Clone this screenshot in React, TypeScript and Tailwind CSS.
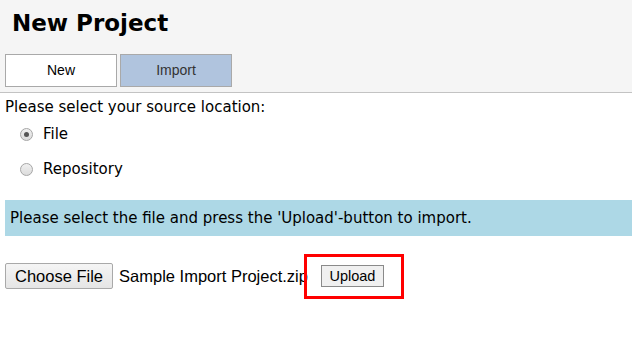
import React, { useState } from 'react';

const Radio = ({ checked, label, onClick }: { checked: boolean; label: string; onClick: () => void }) => (
  <label className="flex items-center h-[35px] pl-[15px] cursor-pointer" onClick={onClick}>
    <span className="w-[13px] h-[13px] rounded-full border border-[#a6a6a6] bg-gradient-to-b from-[#f0f0f0] to-[#dcdcdc] flex items-center justify-center">
      {checked && <span className="w-[5px] h-[5px] rounded-full bg-[#555]" />}
    </span>
    <span className="ml-[10px] text-[15px] text-black">{label}</span>
  </label>
);

const App = () => {
  const [tab, setTab] = useState<'new' | 'import'>('import');
  const [source, setSource] = useState<'file' | 'repo'>('file');

  return (
    <div className="w-[632px] h-[349px] bg-white font-['DejaVu_Sans',Verdana,sans-serif] overflow-hidden">
      <div className="bg-[#f5f5f5] border-b border-[#c3c3c3] h-[93px] px-[5px]">
        <h1 className="text-[23px] font-bold text-black pt-[8px] pl-[7px] leading-[30px] h-[54px]">New Project</h1>
        <div className="flex gap-[3px]">
          <button
            className={`w-[112px] h-[33px] border border-[#a9a9a9] text-[14px] font-['Liberation_Sans',Tahoma,sans-serif] ${tab === 'new' ? 'bg-[#b0c4de] text-[#333]' : 'bg-white text-black'}`}
            onClick={() => setTab('new')}
          >
            New
          </button>
          <button
            className={`w-[112px] h-[33px] border border-[#a9a9a9] text-[14px] font-['Liberation_Sans',Tahoma,sans-serif] ${tab === 'import' ? 'bg-[#b0c4de] text-[#333]' : 'bg-white text-black'}`}
            onClick={() => setTab('import')}
          >
            Import
          </button>
        </div>
      </div>

      <div className="px-[5px]">
        <p className="text-[15px] text-black mt-[5px] leading-[19px]">Please select your source location:</p>
        <Radio checked={source === 'file'} label="File" onClick={() => setSource('file')} />
        <Radio checked={source === 'repo'} label="Repository" onClick={() => setSource('repo')} />

        <div className="mt-[13px] -mr-[5px] h-[36px] bg-[#add8e6] flex items-center pl-[5px] text-[15px] text-black">
          Please select the file and press the 'Upload'-button to import.
        </div>

        <div className="relative flex items-center mt-[27px] font-['Liberation_Sans',Arial,sans-serif]">
          <button className="h-[26px] px-[9px] text-[16.5px] text-black bg-gradient-to-b from-[#f5f5f5] to-[#e5e5e5] border border-[#a9a9a9] rounded-[2px]">
            Choose File
          </button>
          <span className="ml-[6px] text-[16.5px] text-black">Sample Import Project.zip</span>
          <button className="ml-[13px] h-[22px] w-[63px] text-[14.5px] text-black bg-[#f0f0f0] border border-[#8a8a8a]">
            Upload
          </button>
          <div className="absolute left-[299px] top-[-9px] w-[100px] h-[45px] border-[3px] border-[#ff0000]" />
        </div>
      </div>
    </div>
  );
};

export default App;
